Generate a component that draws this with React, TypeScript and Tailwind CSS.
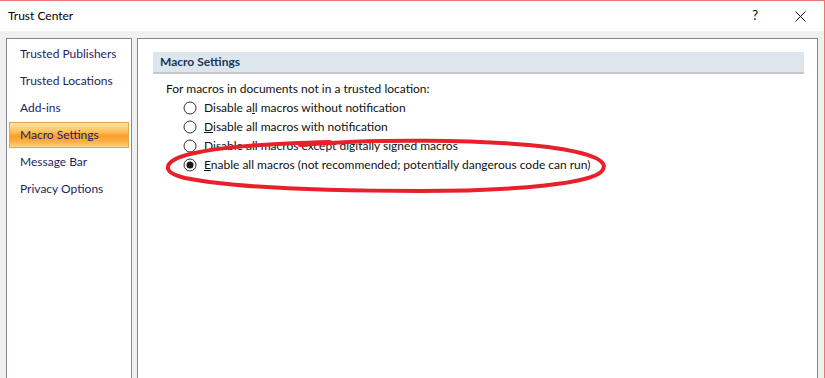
import React from "react";

const navItems = [
  "Trusted Publishers",
  "Trusted Locations",
  "Add-ins",
  "Macro Settings",
  "Message Bar",
  "Privacy Options",
];

function Radio({ checked }: { checked?: boolean }) {
  return (
    <svg width="14" height="14" viewBox="0 0 14 14" className="shrink-0">
      <circle cx="7" cy="7" r="6" fill="#fff" stroke="#333" strokeWidth="1" />
      {checked && <circle cx="7" cy="7" r="3.5" fill="#1a1a1a" />}
    </svg>
  );
}

export default function App() {
  const font = { fontFamily: 'Lato, "Noto Sans", sans-serif' };
  return (
    <div
      className="relative w-[825px] h-[378px] overflow-hidden bg-[#f0f0f0] border-t border-r border-[#e8776c] text-[12px] text-black"
      style={font}
    >
      {/* Title bar */}
      <div className="h-[30px] bg-white flex items-center pl-[8px] pr-[18px]">
        <span className="text-[12px] text-black">Trust Center</span>
        <div className="ml-auto flex items-center gap-[37px]">
          <span className="text-[13px] text-black">?</span>
          <svg width="11" height="11" viewBox="0 0 11 11">
            <path d="M0.5 0.5 L10.5 10.5 M10.5 0.5 L0.5 10.5" stroke="#111" strokeWidth="1" />
          </svg>
        </div>
      </div>

      {/* Body */}
      <div className="flex gap-[5px] pl-[6px] pt-[7px] h-[347px]">
        {/* Left nav */}
        <div className="w-[126px] h-full bg-white border border-[#828790] border-b-0 pt-[2px]">
          {navItems.map((item) => {
            const sel = item === "Macro Settings";
            return (
              <div
                key={item}
                className={
                  sel
                    ? "mx-[2px] mb-[1px] h-[26px] flex items-center pl-[10px] text-[#1e1e64] border border-[#e0a848] bg-[linear-gradient(to_bottom,#fde3a8_0%,#fcc25e_35%,#fa9e2a_55%,#fbb24a_80%,#fdd68c_100%)]"
                    : "mx-[2px] mb-[1px] h-[26px] flex items-center pl-[11px] text-[#1e1e64]"
                }
              >
                {item}
              </div>
            );
          })}
        </div>

        {/* Right content */}
        <div className="w-[681px] h-full bg-white border border-[#828790] border-b-0 pt-[13px] pl-[15px] pr-[13px]">
          <div className="h-[22px] bg-[#dce6ec] border-b-2 border-[#c4c8cc] flex items-center pl-[7px]">
            <span className="font-bold text-[#17365d]">Macro Settings</span>
          </div>
          <div className="pl-[13px] pt-[6px] text-[#111]">
            <div className="h-[18px] flex items-center">For macros in documents not in a trusted location:</div>
            <div className="pl-[17px] flex flex-col">
              <div className="h-[19px] flex items-center gap-[7px]">
                <Radio />
                <span>
                  Disable a<u>l</u>l macros without notification
                </span>
              </div>
              <div className="h-[19px] flex items-center gap-[7px]">
                <Radio />
                <span>
                  <u>D</u>isable all macros with notification
                </span>
              </div>
              <div className="h-[19px] flex items-center gap-[7px]">
                <Radio />
                <span>
                  Disable all macros except di<u>g</u>itally signed macros
                </span>
              </div>
              <div className="h-[19px] flex items-center gap-[7px]">
                <Radio checked />
                <span>
                  <u>E</u>nable all macros (not recommended; potentially dangerous code can run)
                </span>
              </div>
            </div>
          </div>
        </div>
      </div>

      {/* Red hand-drawn ellipse annotation */}
      <svg
        className="absolute left-0 top-0 pointer-events-none"
        width="825"
        height="378"
        viewBox="0 0 825 378"
      >
        <path
          d="M 300 144 C 370 138, 480 138, 548 146 C 592 152, 610 160, 602 170 C 592 182, 520 190, 420 190 C 320 190, 230 186, 185 177 C 160 171, 163 160, 190 153 C 220 146, 260 143, 330 141"
          fill="none"
          stroke="#e8202a"
          strokeWidth="4"
          strokeLinecap="round"
        />
      </svg>
    </div>
  );
}
